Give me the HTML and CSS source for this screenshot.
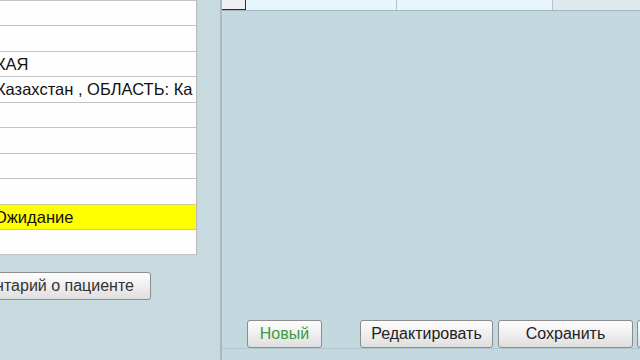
FILE: index.html
```html
<!DOCTYPE html>
<html>

<head>
    <meta http-equiv="content-type" content="text/html; charset=UTF-8">
    <title>
        Карточка пациента
    </title>
    <link rel="stylesheet" href="styles.css">
</head>

<body>
    <div class="page">
        <div class="left">
            <div class="sheet">
                <div class="row"></div>
                <div class="row"></div>
                <div class="row">КАЯ</div>
                <div class="row">Казахстан , ОБЛАСТЬ: Ка</div>
                <div class="row"></div>
                <div class="row"></div>
                <div class="row"></div>
                <div class="row"></div>
                <div class="row status">Ожидание</div>
                <div class="row"></div>
            </div>
            <button class="btn comment">нтарий о пациенте</button>
        </div>

        <div class="right">
            <div class="grid-head">
                <div class="corner"></div>
                <div class="col col-a"></div>
                <div class="col col-b"></div>
                <div class="col col-c"></div>
            </div>
            <div class="grid-body"></div>
            <div class="actions">
                <button class="btn new">Новый</button>
                <button class="btn edit">Редактировать</button>
                <button class="btn save">Сохранить</button>
                <button class="btn more"></button>
            </div>
        </div>
    </div>
</body>

</html>
```

FILE: styles.css
```css
html,
body {
    margin: 0;
    padding: 0;
    width: 640px;
    height: 360px;
    overflow: hidden;
    background-color: #c4d8df;
    font-family: "Liberation Sans", Arial, sans-serif;
    font-size: 16px;
}

.page {
    display: flex;
    height: 360px;
}

.left {
    width: 220px;
    flex-shrink: 0;
    border-right: 2px solid #a8bac1;
    background-color: #c6dadf;
}

.sheet {
    width: 196px;
    border-right: 1px solid #b9b9b9;
    background-color: #fefefe;
    overflow: hidden;
}

.row {
    box-sizing: border-box;
    height: 25px;
    border-top: 1px solid #c4c4c4;
    padding-top: 3px;
    text-indent: -4px;
    white-space: nowrap;
    font-size: 16.5px;
    color: #111;
}

.row:nth-child(even) {
    height: 26px;
}

.row:last-child {
    border-bottom: 1px solid #c4c4c4;
}

.status {
    background-color: #ffff00;
    border-top-color: #d0d08a;
    text-indent: -6px;
}

.btn {
    box-sizing: border-box;
    height: 28px;
    border: 1px solid #8c8c8c;
    border-radius: 3px;
    background: linear-gradient(#fdfdfd, #ececec 60%, #dedede);
    font-family: "Liberation Sans", Arial, sans-serif;
    font-size: 16px;
    color: #222;
    padding: 0;
    white-space: nowrap;
}

.comment {
    display: block;
    width: 200px;
    margin: 17px 0 0 -49px;
    text-align: right;
    padding-right: 16px;
    color: #333;
}

.right {
    flex: 1;
    display: flex;
    flex-direction: column;
}

.grid-head {
    display: flex;
    height: 10px;
    border-bottom: 1px solid #a3b4bb;
}

.corner {
    width: 23px;
    border-right: 1px solid #2e2e2e;
    border-bottom: 1px solid #2e2e2e;
    background-color: #eef0f2;
}

.col {
    border-right: 1px solid #b4c2c7;
}

.col-a {
    width: 150px;
    background-color: #e6f6fb;
}

.col-b {
    width: 155px;
    background-color: #e6f6fb;
}

.col-c {
    flex: 1;
    border-right: none;
    background-color: #dfe8ec;
}

.grid-body {
    flex: 1;
}

.actions {
    display: flex;
    height: 28px;
    padding-left: 25px;
    margin-bottom: 11px;
    border-bottom: 1px solid #b3c6cc;
}

.actions .btn {
    height: 28px;
}

.new {
    width: 75px;
    color: #3f9a3f;
}

.edit {
    width: 133px;
    margin-left: 38px;
}

.save {
    width: 135px;
    margin-left: 5px;
}

.more {
    width: 40px;
    margin-left: 4px;
}
```
